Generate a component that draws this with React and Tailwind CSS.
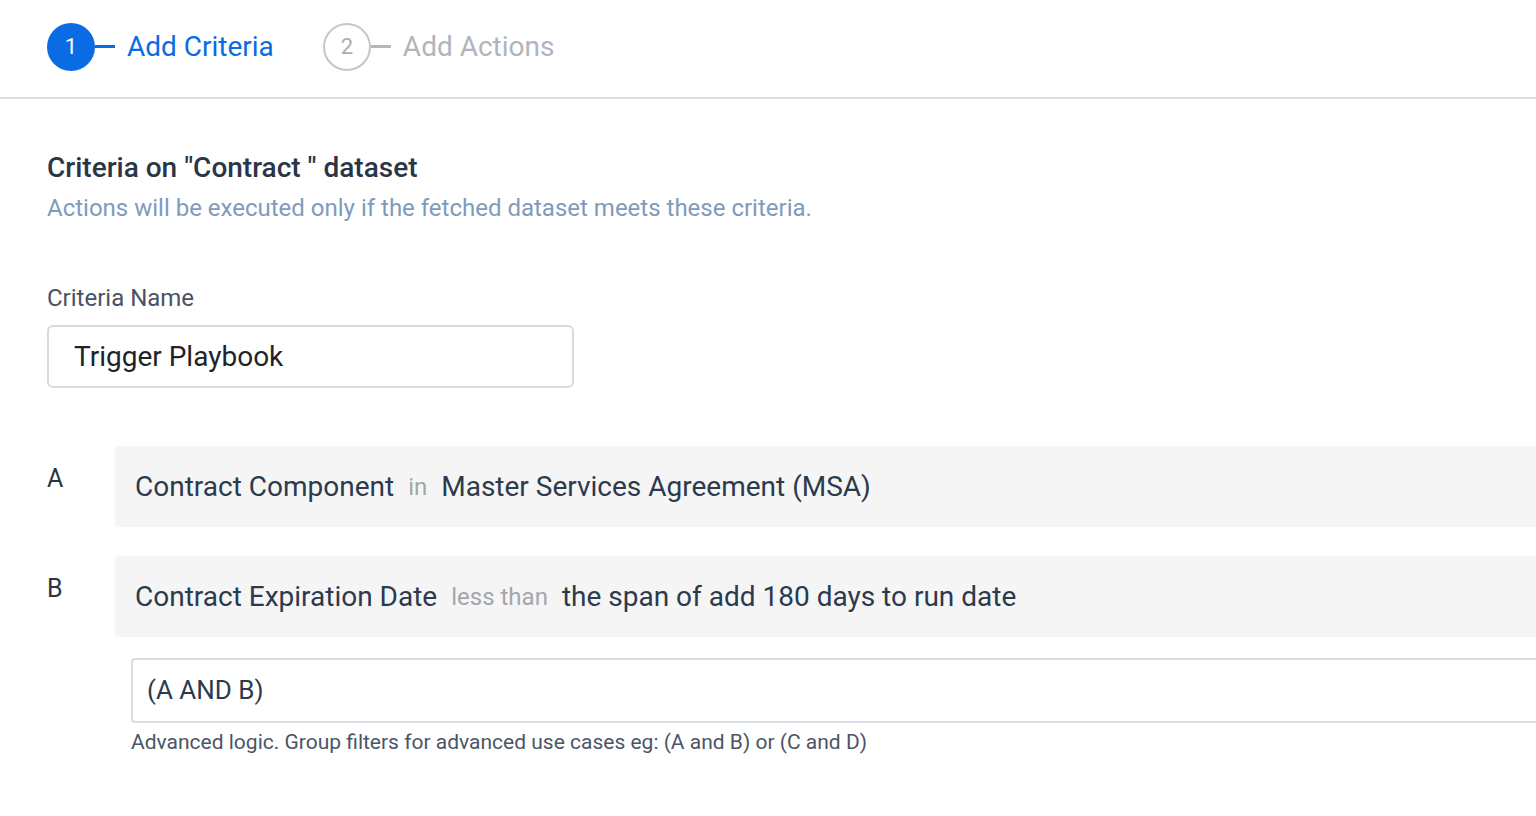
import React from 'react'

function Step({ num, label, active }) {
  return (
    <div className="flex items-center">
      <div
        className={
          active
            ? 'flex h-12 w-12 items-center justify-center rounded-full bg-[#0a6be4] text-[22px] text-white'
            : 'flex h-12 w-12 items-center justify-center rounded-full border-2 border-[#c3c7cc] text-[22px] text-[#a9aeb6]'
        }
      >
        {num}
      </div>
      <div className={active ? 'h-[3px] w-5 bg-[#0a6be4]' : 'h-[3px] w-5 bg-[#b3b8bf]'} />
      <span className={active ? 'ml-3 text-[28px] text-[#0a6be4]' : 'ml-3 text-[28px] text-[#b0b5bd]'}>
        {label}
      </span>
    </div>
  )
}

function CriteriaRow({ letter, field, op, value }) {
  return (
    <div className="flex items-start">
      <div className="w-[68px] pt-[14px] text-[25px] text-[#2b3440]">{letter}</div>
      <div className="flex h-[81px] flex-1 items-center rounded-l-[3px] bg-[#f5f5f5] px-5 text-[28px] text-[#2c3a4d]">
        <span>{field}</span>
        <span className="mx-[14px] text-[24px] text-[#a3a6aa]">{op}</span>
        <span>{value}</span>
      </div>
    </div>
  )
}

export default function App() {
  return (
    <div className="min-h-screen overflow-hidden bg-white font-['Roboto',sans-serif]">
      {/* Stepper */}
      <div className="flex h-[99px] items-center gap-[49px] border-b-2 border-[#dcdcdc] pl-[47px] pb-[4px]">
        <Step num="1" label="Add Criteria" active />
        <Step num="2" label="Add Actions" />
      </div>

      <div className="pl-[47px]">
        <h2 className="mt-[51px] text-[28px] font-medium leading-[36px] text-[#2a3546]">
          Criteria on "Contract " dataset
        </h2>
        <p className="mt-[7px] text-[24px] leading-[30px] text-[#7e9bbd]">
          Actions will be executed only if the fetched dataset meets these criteria.
        </p>

        <label className="mt-[60px] block text-[24px] leading-[30px] text-[#475366]">Criteria Name</label>
        <div className="mt-[12px] flex h-[63px] w-[527px] items-center rounded-[6px] border-2 border-[#dadada] px-[25px] text-[28px] text-[#1f2329]">
          Trigger Playbook
        </div>

        <div className="mt-[58px] flex flex-col gap-[29px]">
          <CriteriaRow
            letter="A"
            field="Contract Component"
            op="in"
            value="Master Services Agreement (MSA)"
          />
          <CriteriaRow
            letter="B"
            field="Contract Expiration Date"
            op="less than"
            value="the span of add 180 days to run date"
          />
        </div>

        <div className="ml-[84px] mt-[21px]">
          <div className="flex h-[65px] items-center rounded-l-[4px] border-2 border-r-0 border-[#d8dde3] px-[14px] text-[26px] text-[#2c3a4d]">
            (A AND B)
          </div>
          <p className="mt-[5px] text-[21px] leading-[28px] text-[#4b5567]">
            Advanced logic. Group filters for advanced use cases eg: (A and B) or (C and D)
          </p>
        </div>
      </div>
    </div>
  )
}
